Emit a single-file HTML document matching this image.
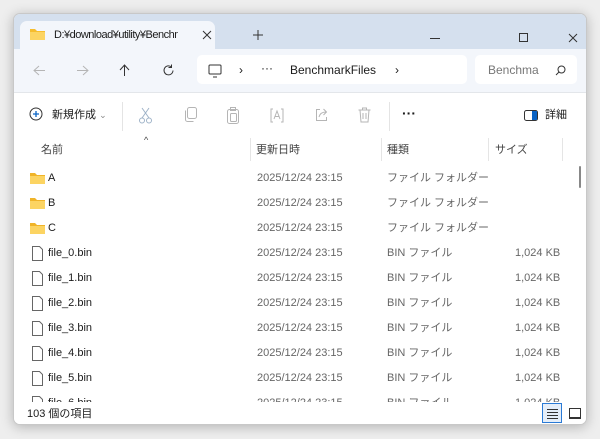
<!DOCTYPE html>
<html><head><meta charset="utf-8"><style>
*{margin:0;padding:0;box-sizing:border-box}
body{width:600px;height:439px;background:#eeeeee;font-family:"Liberation Sans","Noto Sans CJK JP",sans-serif;position:relative;overflow:hidden;color:#1b1b1b}
.win{position:absolute;left:13px;top:13px;width:574px;height:412px;border-radius:7px;background:#fff;box-shadow:0 2px 12px rgba(0,0,0,.25);overflow:hidden;border:1px solid #c8c8c8}
.title{position:absolute;left:0;top:0;width:100%;height:35px;background:#d5e0ee}
.tab{position:absolute;left:6px;top:7px;width:195px;height:29px;background:#f3f6fb;border-radius:7px 7px 0 0}
.addr{position:absolute;left:0;top:35px;width:100%;height:44px;background:#f3f6fb;border-bottom:1px solid #e3e6ea}
.abox{position:absolute;top:6px;height:29px;background:#fff;border-radius:5px}
.t{position:absolute;font-size:12px;white-space:nowrap;line-height:13px}
.g{color:#666}
.tool{position:absolute;top:80px;left:0;width:100%;height:44px;background:#fff}
.hdr{position:absolute;top:124px;left:0;width:550px;height:23px;font-size:11px;color:#444}
.row{position:absolute;left:0;width:550px;height:25px;font-size:11px}
.sb{position:absolute;top:388px;left:0;width:100%;height:24px;background:#fff}
svg.i{position:absolute;fill:none;stroke:#b5b5b5;stroke-width:1}
</style></head><body>
<div class="win">
<div class="title">
<div class="tab"></div>
<svg style="position:absolute;left:16px;top:14px" width="15" height="12"><path d="M0 1h5l2 2h8v9H0z" fill="#f6bd2e"/><rect y="4" width="15" height="8" fill="#fcd462"/></svg>
<div class="t" style="left:40px;top:15px;font-size:11px;letter-spacing:-0.5px;width:124px;overflow:hidden">D:¥download¥utility¥Benchma</div>
<svg style="position:absolute;left:188px;top:16px" width="10" height="10"><path d="M1 1l8 8M9 1l-8 8" stroke="#333"/></svg>
<svg style="position:absolute;left:239px;top:16px" width="10" height="10"><path d="M5 0v10M0 5h10" stroke="#333"/></svg>
<div style="position:absolute;left:416px;top:24px;width:10px;height:1px;background:#333"></div>
<div style="position:absolute;left:505px;top:19px;width:9px;height:9px;border:1px solid #333"></div>
<svg style="position:absolute;left:554px;top:19px" width="10" height="10"><path d="M1 1l8 8M9 1l-8 8" stroke="#333"/></svg>
</div>
<div class="addr">
<svg class="i" style="left:19px;top:16px" width="13" height="11"><path d="M12 5.5H1M6 1L1 5.5 6 10"/></svg>
<svg class="i" style="left:62px;top:16px" width="13" height="11"><path d="M1 5.5h11M7 1l5 4.5L7 10"/></svg>
<svg class="i" style="left:105px;top:15px;stroke:#333" width="11" height="13"><path d="M5.5 12V1M1 6l4.5-5L10 6"/></svg>
<svg class="i" style="left:148px;top:15px;stroke:#333" width="13" height="13"><path d="M11 6.5A4.5 4.5 0 1 1 9.5 3M9.5 0.5v3h-3"/></svg>
<div class="abox" style="left:183px;width:270px"></div>
<svg style="position:absolute;left:194px;top:15px" width="14" height="14"><rect x="1" y="1" width="12" height="9" rx="1" fill="none" stroke="#333"/><path d="M5 13h4" stroke="#333"/></svg>
<div class="t" style="left:225px;top:15px">›</div>
<div class="t" style="left:247px;top:13px">···</div>
<div class="t" style="left:276px;top:15px">BenchmarkFiles</div>
<div class="t" style="left:381px;top:15px">›</div>
<div class="abox" style="left:461px;width:102px"></div>
<div class="t g" style="left:474px;top:15px;color:#777">Benchma</div>
<svg class="i" style="left:541px;top:16px;stroke:#333" width="11" height="11"><circle cx="6.5" cy="4.5" r="3.5"/><path d="M4 7L1 10"/></svg>
</div>
<div class="tool">
<svg style="position:absolute;left:15px;top:13px" width="14" height="14"><circle cx="7" cy="7" r="6" fill="none" stroke="#333"/><path d="M7 4v6M4 7h6" stroke="#0a63c4" stroke-width="1.3"/></svg>
<div class="t" style="left:38px;top:15px;font-size:11px">新規作成 <span style="color:#888;font-size:9px">⌄</span></div>
<div style="position:absolute;left:108px;top:8px;width:1px;height:29px;background:#e4e4e4"></div>
<svg class="i" style="left:125px;top:13px;stroke:#9fb3c8" width="13" height="17"><path d="M3 1l7 10M10 1L3 11"/><circle cx="3" cy="13.5" r="2.5"/><circle cx="10" cy="13.5" r="2.5"/></svg>
<svg class="i" style="left:169px;top:13px" width="14" height="16"><rect x="4.5" y=".5" width="9" height="11" rx="2"/><path d="M2.5 3.5v9a2 2 0 0 0 2 2h6"/></svg>
<svg class="i" style="left:212px;top:13px" width="14" height="17"><rect x="1.5" y="2.5" width="11" height="14" rx="2"/><rect x="4.5" y=".5" width="5" height="3"/><rect x="4.5" y="6.5" width="6" height="8" rx="1"/></svg>
<svg class="i" style="left:255px;top:13px" width="16" height="17"><path d="M4 2H2v13h2M12 2h2v13h-2"/><path d="M5 12l3-8 3 8M6 9.5h4"/></svg>
<svg class="i" style="left:300px;top:13px" width="15" height="16"><path d="M6 2.5H2.5v11h10V10"/><path d="M5 10c1-4 4-5 7-5M9.5 2l3 3-3 3"/></svg>
<svg class="i" style="left:344px;top:13px" width="13" height="16"><path d="M.5 3h12M4.5 3V1h4v2M2 3l1 12h7l1-12M5 6v6M8 6v6"/></svg>
<div style="position:absolute;left:375px;top:8px;width:1px;height:29px;background:#e4e4e4"></div>
<div class="t" style="left:388px;top:13px;font-size:14px;font-weight:bold">···</div>
<svg style="position:absolute;left:510px;top:16px" width="14" height="11"><rect x=".5" y=".5" width="13" height="10" rx="2" fill="none" stroke="#333"/><rect x="8" y="1" width="5" height="9" fill="#0a63c4"/></svg>
<div class="t" style="left:531px;top:15px;font-size:11px">詳細</div>
</div>
<div class="hdr">
<div class="t" style="left:27px;top:6px;font-size:11px">名前</div>
<div class="t" style="left:130px;top:-4px;font-size:9px">^</div>
<div style="position:absolute;left:236px;top:0;width:1px;height:23px;background:#e5e5e5"></div>
<div class="t" style="left:242px;top:6px;font-size:11px">更新日時</div>
<div style="position:absolute;left:367px;top:0;width:1px;height:23px;background:#e5e5e5"></div>
<div class="t" style="left:373px;top:6px;font-size:11px">種類</div>
<div style="position:absolute;left:474px;top:0;width:1px;height:23px;background:#e5e5e5"></div>
<div class="t" style="left:481px;top:6px;font-size:11px">サイズ</div>
<div style="position:absolute;left:548px;top:0;width:1px;height:23px;background:#e5e5e5"></div>
</div>
<div style="position:absolute;left:565px;top:152px;width:2px;height:22px;background:#888;border-radius:1px"></div>
<div id="rows"></div>
<div class="sb">
<div class="t" style="left:13px;top:6px;font-size:11px">103 個の項目</div>
<div style="position:absolute;left:528px;top:1px;width:20px;height:20px;border:1px solid #2a7ad5;background:#e5eef9"></div>
<svg style="position:absolute;left:533px;top:6px" width="11" height="11"><path d="M0 1.5h11M0 4.5h11M0 7.5h11M0 10.5h11" stroke="#333"/></svg>
<div style="position:absolute;left:555px;top:6px;width:12px;height:11px;border:1px solid #333;border-bottom-width:2px"></div>
</div>
</div>
<script>
var h='';
var items=[['A',1],['B',1],['C',1]];for(var i=0;i<7;i++)items.push(['file_'+i+'.bin',0]);
items.forEach(function(it,k){var y=152+k*25;
var ic=it[1]?'<svg style="position:absolute;left:16px;top:6px" width="15" height="12"><path d="M0 1h5l2 2h8v9H0z" fill="#f0b429"/><rect y="4" width="15" height="8" fill="#fcd462"/></svg>'
:'<svg style="position:absolute;left:18px;top:5px" width="11" height="15"><path d="M.5 .5h7l3 3v11H.5z" fill="#fff" stroke="#666"/></svg>';
h+='<div class="row" style="top:'+y+'px">'+ic+'<div class="t" style="left:34px;top:6px;font-size:11px">'+it[0]+'</div><div class="t g" style="left:243px;top:6px;font-size:11px">2025/12/24 23:15</div><div class="t g" style="left:373px;top:6px;font-size:11px">'+(it[1]?'ファイル フォルダー':'BIN ファイル')+'</div>'+(it[1]?'':'<div class="t g" style="left:501px;top:6px;font-size:11px">1,024 KB</div>')+'</div>';});
document.getElementById('rows').outerHTML='<div style="position:absolute;left:0;top:0;width:550px;height:388px;overflow:hidden">'+h+'</div>';
</script>
</body></html>
